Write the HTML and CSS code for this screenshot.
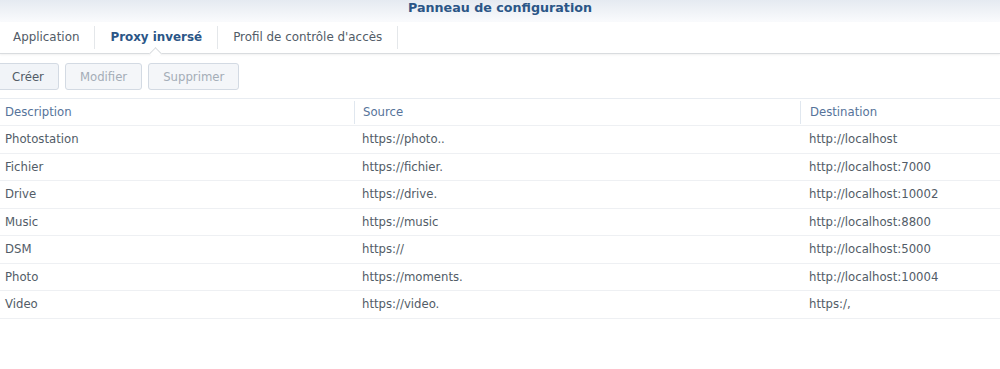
FILE: index.html
```html
<!DOCTYPE html>
<html lang="fr">
<head>
  <meta charset="UTF-8">
  <title>Panneau de configuration</title>
  <link rel="stylesheet" href="styles.css">
</head>
<body>
  <div class="titlebar">Panneau de configuration</div>

  <div class="tabs">
    <div class="tab">Application</div>
    <div class="tab active">Proxy inversé</div>
    <div class="tab">Profil de contrôle d'accès</div>
  </div>

  <div class="toolbar">
    <button class="btn">Créer</button>
    <button class="btn" disabled>Modifier</button>
    <button class="btn" disabled>Supprimer</button>
  </div>

  <div class="grid">
    <div class="row head">
      <div class="cell c1">Description</div>
      <div class="cell c2">Source</div>
      <div class="cell c3">Destination</div>
    </div>
    <div class="row">
      <div class="cell c1">Photostation</div>
      <div class="cell c2">https://photo..</div>
      <div class="cell c3">http://localhost</div>
    </div>
    <div class="row">
      <div class="cell c1">Fichier</div>
      <div class="cell c2">https://fichier.</div>
      <div class="cell c3">http://localhost:7000</div>
    </div>
    <div class="row">
      <div class="cell c1">Drive</div>
      <div class="cell c2">https://drive.</div>
      <div class="cell c3">http://localhost:10002</div>
    </div>
    <div class="row">
      <div class="cell c1">Music</div>
      <div class="cell c2">https://music</div>
      <div class="cell c3">http://localhost:8800</div>
    </div>
    <div class="row">
      <div class="cell c1">DSM</div>
      <div class="cell c2">https://</div>
      <div class="cell c3">http://localhost:5000</div>
    </div>
    <div class="row">
      <div class="cell c1">Photo</div>
      <div class="cell c2">https://moments.</div>
      <div class="cell c3">http://localhost:10004</div>
    </div>
    <div class="row">
      <div class="cell c1">Video</div>
      <div class="cell c2">https://video.</div>
      <div class="cell c3">https:/,</div>
    </div>
  </div>
</body>
</html>
```

FILE: styles.css
```css
:root {
  --text: #525c67;
  --muted: #a4adb7;
  --title: #2b5687;
  --head: #56739a;
  --line: #e8ecf1;
}

body {
  margin: 0;
  font-family: "DejaVu Sans", Verdana, sans-serif;
  font-size: 11.7px;
  color: var(--text);
  background: #fff;
  overflow: hidden;
}

.titlebar {
  height: 22px;
  line-height: 15px;
  text-align: center;
  font-weight: bold;
  font-size: 12.7px;
  color: var(--title);
  background: linear-gradient(#e5eaf1, #fafbfd);
}

.tabs {
  display: flex;
  height: 31px;
  align-items: center;
  border-bottom: 1px solid #d9dcdf;
  box-shadow: 0 1px 2px rgba(0, 0, 0, 0.06);
  font-size: 11.9px;
}
.tab {
  padding: 0 15px 0 13px;
  height: 23px;
  line-height: 23px;
  border-right: 1px solid #e4e7ea;
}
.tab + .tab {
  padding-left: 15px;
}
.tab.active {
  font-weight: bold;
  color: var(--title);
  position: relative;
}
.tab.active::after {
  content: "";
  position: absolute;
  left: 50%;
  bottom: -9px;
  width: 8px;
  height: 8px;
  margin-left: -5px;
  background: #fff;
  border-left: 1px solid #d9dcdf;
  border-top: 1px solid #d9dcdf;
  transform: rotate(45deg);
}

.toolbar {
  display: flex;
  gap: 6px;
  margin: 9px 0 0 -3px;
}
.btn {
  height: 27px;
  padding: 0 14px;
  font-family: inherit;
  font-size: 11.7px;
  color: var(--text);
  background: #f1f4f8;
  border: 1px solid #d3dae3;
  border-radius: 3px;
}
.btn:disabled {
  color: var(--muted);
  background: #f4f6f9;
}

.grid {
  margin-top: 8px;
  border-top: 1px solid var(--line);
}
.row {
  display: flex;
  height: 27.5px;
  align-items: center;
  border-bottom: 1px solid #eef0f3;
  box-sizing: border-box;
}
.row.head {
  height: 27px;
  color: var(--head);
}
.cell {
  padding-left: 8px;
  box-sizing: border-box;
}
.c1 { width: 354px; padding-left: 5px; }
.c2 { width: 446px; }
.c3 { flex: 1; padding-left: 9px; }
.head .cell {
  height: 23px;
  line-height: 23px;
}
.head .c2, .head .c3 {
  border-left: 1px solid #e0e7ef;
}
```
